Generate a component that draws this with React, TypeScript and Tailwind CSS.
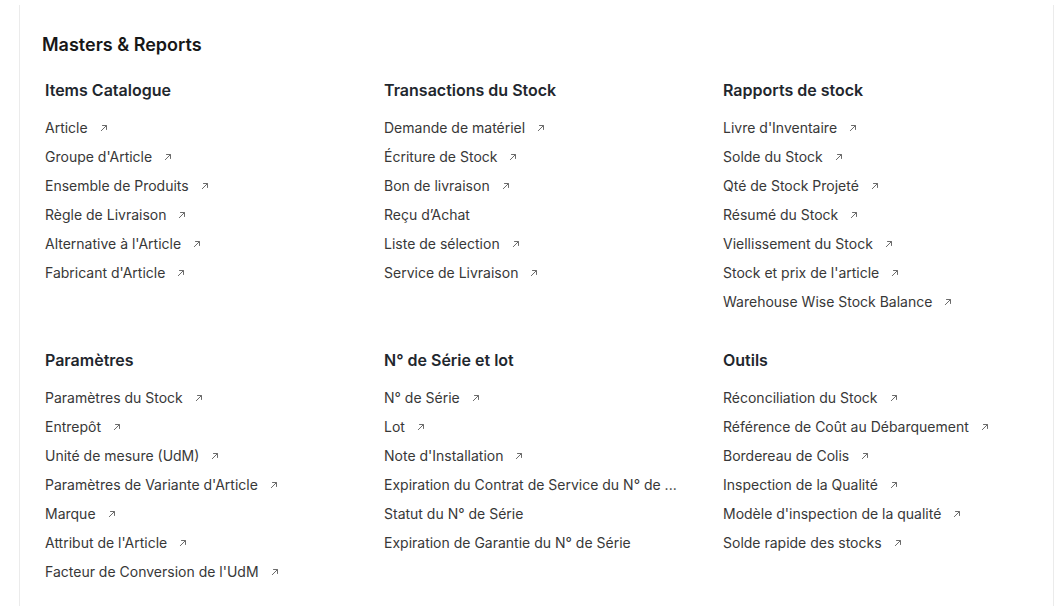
import React from "react";

type Item = { label: string; arrow?: boolean };
type Section = { title: string; items: Item[] };

const a = (label: string): Item => ({ label, arrow: true });
const n = (label: string): Item => ({ label, arrow: false });

const sections: Section[] = [
  {
    title: "Items Catalogue",
    items: [
      a("Article"),
      a("Groupe d'Article"),
      a("Ensemble de Produits"),
      a("Règle de Livraison"),
      a("Alternative à l'Article"),
      a("Fabricant d'Article"),
    ],
  },
  {
    title: "Transactions du Stock",
    items: [
      a("Demande de matériel"),
      a("Écriture de Stock"),
      a("Bon de livraison"),
      n("Reçu d’Achat"),
      a("Liste de sélection"),
      a("Service de Livraison"),
    ],
  },
  {
    title: "Rapports de stock",
    items: [
      a("Livre d'Inventaire"),
      a("Solde du Stock"),
      a("Qté de Stock Projeté"),
      a("Résumé du Stock"),
      a("Viellissement du Stock"),
      a("Stock et prix de l'article"),
      a("Warehouse Wise Stock Balance"),
    ],
  },
  {
    title: "Paramètres",
    items: [
      a("Paramètres du Stock"),
      a("Entrepôt"),
      a("Unité de mesure (UdM)"),
      a("Paramètres de Variante d'Article"),
      a("Marque"),
      a("Attribut de l'Article"),
      a("Facteur de Conversion de l'UdM"),
    ],
  },
  {
    title: "N° de Série et lot",
    items: [
      a("N° de Série"),
      a("Lot"),
      a("Note d'Installation"),
      n("Expiration du Contrat de Service du N° de ..."),
      n("Statut du N° de Série"),
      n("Expiration de Garantie du N° de Série"),
    ],
  },
  {
    title: "Outils",
    items: [
      a("Réconciliation du Stock"),
      a("Référence de Coût au Débarquement"),
      a("Bordereau de Colis"),
      a("Inspection de la Qualité"),
      a("Modèle d'inspection de la qualité"),
      a("Solde rapide des stocks"),
    ],
  },
];

function Arrow() {
  return (
    <svg
      width="12"
      height="12"
      viewBox="0 0 12 12"
      fill="none"
      className="ml-[10px] shrink-0"
    >
      <path
        d="M3.3 8.7 L8.3 3.7 M4.5 3.5 H8.5 V7.5"
        stroke="#6b6b6b"
        strokeWidth="1"
        strokeLinecap="round"
        strokeLinejoin="round"
      />
    </svg>
  );
}

function SectionBlock({ s }: { s: Section }) {
  return (
    <div className="flex flex-col">
      <div className="h-[20px] text-[16px] leading-[20px] font-semibold text-[#1f272e]">
        {s.title}
      </div>
      <div className="mt-[13px] flex flex-col">
        {s.items.map((it) => (
          <div key={it.label} className="flex h-[29px] items-center">
            <span className="whitespace-nowrap text-[14px] leading-[20px] text-[#383838]">
              {it.label}
            </span>
            {it.arrow && <Arrow />}
          </div>
        ))}
      </div>
    </div>
  );
}

export default function App() {
  return (
    <div
      className="h-[606px] w-[1060px] overflow-hidden bg-white"
      style={{ fontFamily: "Inter, 'Noto Sans', sans-serif" }}
    >
      <div className="ml-[19px] mt-[5px] h-[601px] w-[1035px] border-x border-[#ebebeb] pl-[22px] pt-[28px]">
        <div className="h-[24px] text-[18px] leading-[24px] font-semibold text-[#171717]">
          Masters &amp; Reports
        </div>
        <div className="mt-[23px] grid grid-cols-[339px_339px_339px] gap-y-[34px] pl-[3px]">
          {sections.map((s) => (
            <SectionBlock key={s.title} s={s} />
          ))}
        </div>
      </div>
    </div>
  );
}
